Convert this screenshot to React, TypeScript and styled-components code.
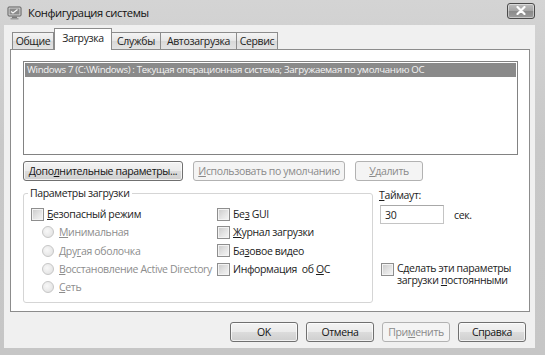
import React from "react";
import styled, { createGlobalStyle, css } from "styled-components";

const FONT = `"Open Sans", "Noto Sans", sans-serif`;

const Global = createGlobalStyle`
  html, body { margin: 0; padding: 0; background: #c9c9c9; }
  body { font-family: ${FONT}; }
  * { box-sizing: border-box; }
`;

const Window = styled.div`
  width: 545px;
  height: 355px;
  display: flex;
  flex-direction: column;
  padding: 0 10px 7px 4px;
  background: linear-gradient(180deg, #d4d4d4 0%, #c8c8c8 40%, #c6c6c6 100%);
  font-family: ${FONT};
  font-size: 10.5px;
  letter-spacing: -0.35px;
  color: #1c1c1c;
  overflow: hidden;
`;

const TitleBar = styled.div`
  height: 25px;
  flex: none;
  display: flex;
  align-items: center;
  padding: 0 0 0 3px;
  gap: 6px;
`;

const TitleText = styled.div`
  flex: 1;
  font-size: 11.2px;
  letter-spacing: -0.4px;
  color: #111;
`;

const CloseButton = styled.div`
  width: 28px;
  height: 16px;
  margin-top: -4px;
  border: 1px solid #4a4a4a;
  border-radius: 3px;
  background: linear-gradient(180deg, #bdbdbd 0%, #a4a4a4 50%, #8a8a8a 51%, #9c9c9c 100%);
  box-shadow: inset 0 0 0 1px rgba(255, 255, 255, 0.45);
  display: flex;
  align-items: center;
  justify-content: center;
`;

const Client = styled.div`
  flex: 1;
  display: flex;
  flex-direction: column;
  background: #f0f0f0;
  padding: 3px 5px 0 6px;
`;

const TabStrip = styled.div`
  display: flex;
  align-items: flex-end;
  height: 21px;
  padding-left: 2px;
  position: relative;
  z-index: 1;
`;

const Tab = styled.div<{ $active?: boolean; $w: number }>`
  width: ${(p) => p.$w}px;
  height: 17px;
  flex: none;
  display: flex;
  align-items: center;
  justify-content: center;
  border: 1px solid #8c8c8c;
  border-bottom: none;
  border-left-width: 0;
  background: linear-gradient(180deg, #f4f4f4 0%, #e6e6e6 50%, #d9d9d9 51%, #e3e3e3 100%);
  color: #222;
  white-space: nowrap;
  &:first-child { border-left-width: 1px; }
  ${(p) =>
    p.$active &&
    css`
      height: 22px;
      margin: 0 0 -1px 0;
      padding-bottom: 4px;
      border-left-width: 1px;
      background: #ffffff;
      position: relative;
    `}
`;

const Panel = styled.div`
  height: 263px;
  flex: none;
  background: #fff;
  border: 1px solid #8c8c8c;
  padding: 11px 11px 0 12px;
  display: flex;
  flex-direction: column;
`;

const ListBox = styled.div`
  height: 94px;
  border: 1px solid #828282;
  padding: 1px;
  background: #fff;
`;

const ListItem = styled.div<{ $selected?: boolean }>`
  height: 14px;
  line-height: 14px;
  padding-left: 2px;
  white-space: nowrap;
  font-size: 9.7px;
  letter-spacing: -0.35px;
  ${(p) =>
    p.$selected &&
    css`
      background: #8a8a8a;
      color: #f4f4f4;
    `}
`;

const ButtonRow = styled.div`
  display: flex;
  gap: 10px;
  margin-top: 6px;
`;

const Button = styled.div<{ $w: number; $disabled?: boolean }>`
  width: ${(p) => p.$w}px;
  height: 20px;
  flex: none;
  display: flex;
  align-items: center;
  justify-content: center;
  border-radius: 3px;
  white-space: nowrap;
  border: 1px solid #707070;
  background: linear-gradient(180deg, #f3f3f3 0%, #ebebeb 49%, #dcdcdc 50%, #cfcfcf 100%);
  box-shadow: inset 0 0 0 1px rgba(255, 255, 255, 0.7);
  color: #141414;
  ${(p) =>
    p.$disabled &&
    css`
      border-color: #b2b2b2;
      background: #f4f4f4;
      box-shadow: none;
      color: #8a8a8a;
    `}
`;

const U = styled.span`
  text-decoration: underline;
  text-underline-offset: 1px;
`;

const Options = styled.div`
  display: flex;
  margin-top: 5px;
  gap: 6px;
`;

const GroupBox = styled.fieldset`
  width: 350px;
  height: 117px;
  flex: none;
  margin: 0;
  padding: 5px 0 0 7px;
  border: 1px solid #d5d5d5;
  border-radius: 3px;
  display: grid;
  grid-template-columns: 186px 1fr;
  align-content: start;
`;

const Legend = styled.legend`
  padding: 0 2px;
  margin-left: -3px;
  color: #1c1c1c;
`;

const Column = styled.div`
  display: flex;
  flex-direction: column;
`;

const OptionRow = styled.div<{ $indent?: number; $disabled?: boolean }>`
  height: 18.3px;
  display: flex;
  align-items: center;
  gap: 3px;
  padding-left: ${(p) => p.$indent ?? 0}px;
  white-space: nowrap;
  color: ${(p) => (p.$disabled ? "#8d8d8d" : "#1c1c1c")};
`;

const CheckBox = styled.span`
  width: 13px;
  height: 13px;
  flex: none;
  border: 1px solid #8e8e8e;
  background: linear-gradient(135deg, #c9c9c9 0%, #e4e4e4 55%, #f6f6f6 100%);
  box-shadow: inset 0 0 0 1px #f3f3f3;
`;

const Radio = styled.span`
  width: 12px;
  height: 12px;
  flex: none;
  border-radius: 50%;
  border: 1px solid #c6c6c6;
  background: radial-gradient(circle at 40% 40%, #f8f8f8 0%, #e6e6e6 70%, #dcdcdc 100%);
  margin-right: 2px;
`;

const RightColumn = styled.div`
  display: flex;
  flex-direction: column;
  white-space: nowrap;
  padding-top: 3px;
`;

const Label = styled.div`
  height: 13px;
  line-height: 13px;
`;

const TimeoutRow = styled.div`
  display: flex;
  align-items: center;
  gap: 10px;
  margin-top: 3px;
`;

const Input = styled.div`
  width: 64px;
  height: 19px;
  margin-left: 1px;
  border: 1px solid #c4c4c4;
  border-top-color: #a8a8a8;
  background: #fff;
  padding-left: 4px;
  display: flex;
  align-items: center;
`;

const PersistRow = styled.div`
  display: flex;
  gap: 3px;
  margin-top: 39px;
  padding-left: 2px;
`;

const PersistText = styled.div`
  line-height: 12px;
  margin-top: -1px;
`;

const Footer = styled.div`
  flex: 1;
  display: flex;
  justify-content: flex-end;
  align-items: flex-start;
  gap: 8px;
  padding: 10px 4px 0 0;
`;

function MsconfigIcon() {
  return (
    <svg width="15" height="14" viewBox="0 0 15 14">
      <rect x="1" y="1" width="13" height="9" rx="1" fill="#d8d8d8" stroke="#5a5a5a" />
      <rect x="2.5" y="2.5" width="10" height="6" fill="#8a8a8a" />
      <path d="M4 5.5 L6 7 L10.5 3.5" stroke="#f4f4f4" strokeWidth="1.3" fill="none" />
      <rect x="5" y="10.5" width="5" height="1.5" fill="#7a7a7a" />
      <rect x="3.5" y="12" width="8" height="1.5" fill="#9a9a9a" />
    </svg>
  );
}

function CloseGlyph() {
  return (
    <svg width="10" height="9" viewBox="0 0 10 9">
      <path d="M1.5 1 L8.5 8 M8.5 1 L1.5 8" stroke="#fff" strokeWidth="2.2" strokeLinecap="round" />
    </svg>
  );
}

export default function App() {
  return (
    <>
      <Global />
      <Window>
        <TitleBar>
          <MsconfigIcon />
          <TitleText>Конфигурация системы</TitleText>
          <CloseButton>
            <CloseGlyph />
          </CloseButton>
        </TitleBar>
        <Client>
          <TabStrip>
            <Tab $w={42}>Общие</Tab>
            <Tab $w={58} $active>
              Загрузка
            </Tab>
            <Tab $w={49}>Службы</Tab>
            <Tab $w={76}>Автозагрузка</Tab>
            <Tab $w={41}>Сервис</Tab>
          </TabStrip>
          <Panel>
            <ListBox>
              <ListItem $selected>
                Windows 7 (C:\Windows) : Текущая операционная система; Загружаемая по умолчанию ОС
              </ListItem>
            </ListBox>
            <ButtonRow>
              <Button $w={160}>
                Допо<U>л</U>нительные параметры...
              </Button>
              <Button $w={152} $disabled>
                <U>И</U>спользовать по умолчанию
              </Button>
              <Button $w={68} $disabled>
                <U>У</U>далить
              </Button>
            </ButtonRow>
            <Options>
              <GroupBox>
                <Legend>Параметры загрузки</Legend>
                <Column>
                  <OptionRow>
                    <CheckBox />
                    <span>
                      <U>Б</U>езопасный режим
                    </span>
                  </OptionRow>
                  <OptionRow $indent={11} $disabled>
                    <Radio />
                    <span>
                      <U>М</U>инимальная
                    </span>
                  </OptionRow>
                  <OptionRow $indent={11} $disabled>
                    <Radio />
                    <span>
                      Дру<U>г</U>ая оболочка
                    </span>
                  </OptionRow>
                  <OptionRow $indent={11} $disabled>
                    <Radio />
                    <span>
                      <U>В</U>осстановление Active Directory
                    </span>
                  </OptionRow>
                  <OptionRow $indent={11} $disabled>
                    <Radio />
                    <span>
                      <U>С</U>еть
                    </span>
                  </OptionRow>
                </Column>
                <Column>
                  <OptionRow>
                    <CheckBox />
                    <span>
                      Бе<U>з</U> GUI
                    </span>
                  </OptionRow>
                  <OptionRow>
                    <CheckBox />
                    <span>
                      <U>Ж</U>урнал загрузки
                    </span>
                  </OptionRow>
                  <OptionRow>
                    <CheckBox />
                    <span>
                      Ба<U>з</U>овое видео
                    </span>
                  </OptionRow>
                  <OptionRow>
                    <CheckBox />
                    <span>
                      Информация&nbsp; об <U>О</U>С
                    </span>
                  </OptionRow>
                </Column>
              </GroupBox>
              <RightColumn>
                <Label>
                  <U>Т</U>аймаут:
                </Label>
                <TimeoutRow>
                  <Input>30</Input>
                  <span>сек.</span>
                </TimeoutRow>
                <PersistRow>
                  <CheckBox />
                  <PersistText>
                    Сделать эти параметры
                    <br />
                    загрузки <U>п</U>остоянными
                  </PersistText>
                </PersistRow>
              </RightColumn>
            </Options>
          </Panel>
          <Footer>
            <Button $w={68}>OK</Button>
            <Button $w={68}>Отмена</Button>
            <Button $w={68} $disabled>
              При<U>м</U>енить
            </Button>
            <Button $w={68}>Справка</Button>
          </Footer>
        </Client>
      </Window>
    </>
  );
}
